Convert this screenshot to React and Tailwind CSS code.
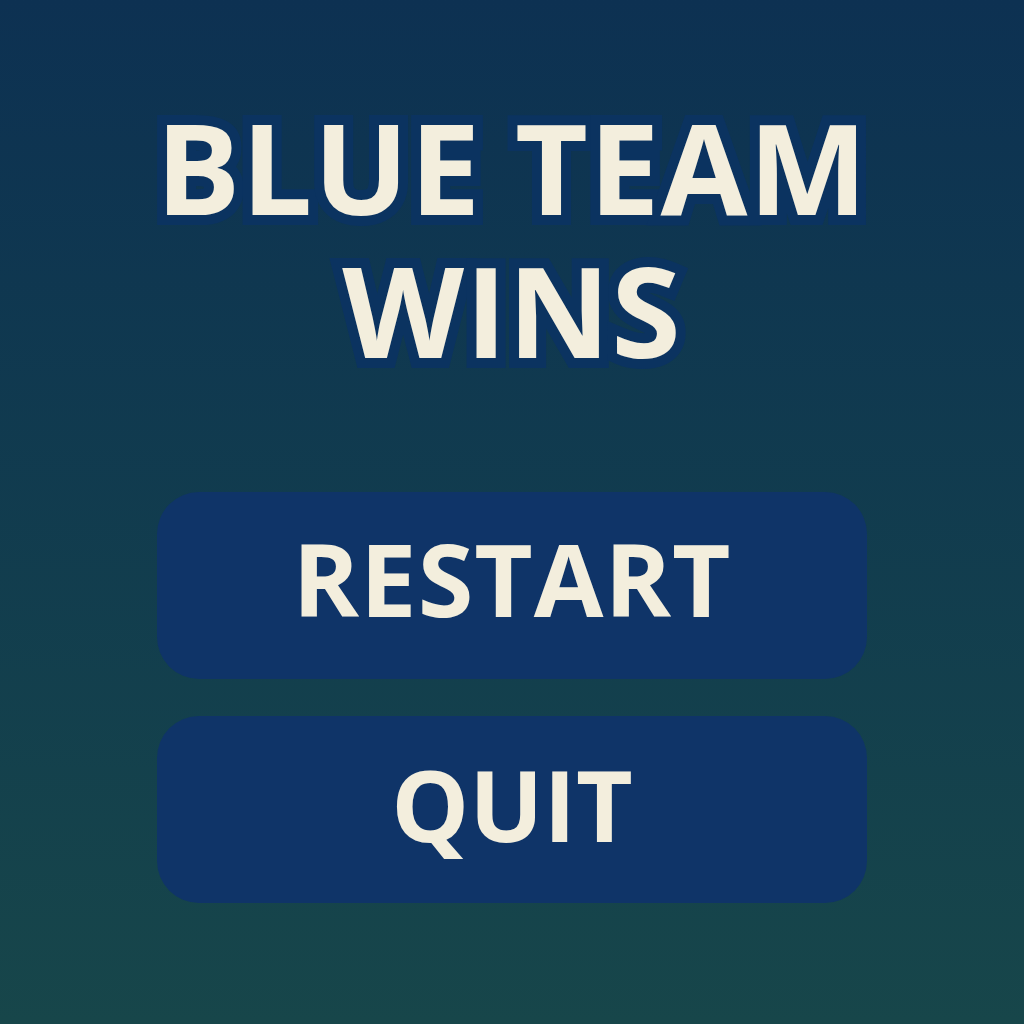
import React from 'react';

const App = () => {
    return (
        <div className="w-[1024px] h-[1024px] bg-gradient-to-b from-[#0d3152] to-[#17464a] flex flex-col items-center font-['Open_Sans',sans-serif]">
            {/* Title */}
            <h1 className="mt-[103px] flex flex-col items-center gap-[17px] text-[#f3eedd] font-bold text-[126px] leading-[126px] tracking-[1px] [paint-order:stroke_fill] [-webkit-text-stroke:20px_#0b3360]">
                <span>BLUE TEAM</span>
                <span>WINS</span>
            </h1>

            {/* Buttons */}
            <div className="mt-[120px] flex flex-col gap-[37px]">
                <button className="w-[710px] h-[187px] pb-[14px] rounded-[42px] bg-[#0f3468] text-[#f3eedd] font-bold text-[101px] tracking-[1px]">
                    RESTART
                </button>
                <button className="w-[710px] h-[187px] pb-[10px] rounded-[42px] bg-[#0f3468] text-[#f3eedd] font-bold text-[98px] tracking-[0px]">
                    QUIT
                </button>
            </div>
        </div>
    );
};

export default App;
